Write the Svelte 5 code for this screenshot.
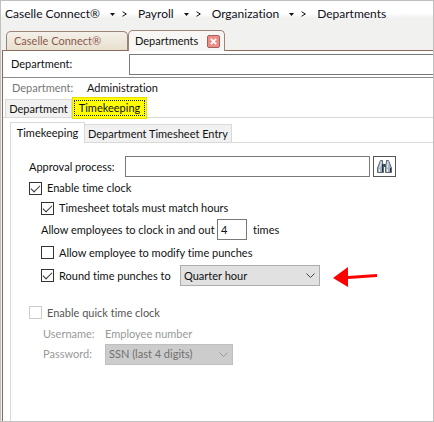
<script lang="ts">
  const crumbs = ["Caselle Connect®", "Payroll", "Organization", "Departments"];

  let department = "";
  let approvalProcess = "";
  let enableClock = true;
  let matchHours = true;
  let clockTimes = "4";
  let modifyPunches = false;
  let roundPunches = true;
  let roundTo = "Quarter hour";
  let quickClock = false;
  let password = "SSN (last 4 digits)";
</script>

<main>
  <nav class="crumbs">
    {#each crumbs as crumb, i}
      <a href="#{i}">{crumb}</a>
      {#if i < crumbs.length - 1}
        <svg class="caret" viewBox="0 0 5 3"><path d="M0 0h5L2.500 3z" /></svg>
        <svg class="angle" viewBox="0 0 5 6"><path d="M.5 .7L4.300 3L.5 5.300" /></svg>
      {/if}
    {/each}
  </nav>

  <div class="window-tabs">
    <button class="window-tab">Caselle Connect®</button>
    <div class="window-tab active">
      <button class="tab-name">Departments</button>
      <button class="close" aria-label="Close tab">
        <svg viewBox="0 0 8 8"><path d="M1 1l6 6M7 1l-6 6" /></svg>
      </button>
    </div>
  </div>

  <section class="window">
    <div class="lookup">
      <label for="department">Department:</label>
      <input id="department" type="text" bind:value={department} />
    </div>
    <div class="current">
      <span class="muted">Department:</span>
      <span>Administration</span>
    </div>

    <div class="tabs outer">
      <button class="tab">Department</button>
      <button class="tab marked"><span>Timekeeping</span></button>
    </div>

    <div class="page">
      <div class="tabs inner">
        <button class="tab active">Timekeeping</button>
        <button class="tab">Department Timesheet Entry</button>
      </div>

      <form class="form">
        <div class="row">
          <label class="approval-label" for="approval">Approval process:</label>
          <input id="approval" class="approval" type="text" bind:value={approvalProcess} />
          <button type="button" class="find" aria-label="Find">
            <svg viewBox="0 0 15 13">
              <path class="barrel" d="M3.500 .5h2v2.500l1 1.500v8H.5V8L2.500 3zM11.500 .5h-2v2.500l-1 1.500v8h6V8l-2-5z" />
              <path class="bridge" d="M6.500 4h2v3h-2z" />
              <path class="shine" d="M4 1.500v2L2.500 7.500M2.500 9v3M11 1.500v2.500l-.5 3.500M10.500 9v3" />
              <path class="shade" d="M5.500 4v8M13.500 8v4" />
            </svg>
          </button>
        </div>

        <div class="row short">
          <label class="check">
            <input type="checkbox" bind:checked={enableClock} />
            Enable time clock
          </label>
        </div>
        <div class="row short indent">
          <label class="check">
            <input type="checkbox" bind:checked={matchHours} />
            Timesheet totals must match hours
          </label>
        </div>
        <div class="row indent">
          <label class="times-label" for="times">Allow employees to clock in and out</label>
          <input id="times" class="times" type="text" bind:value={clockTimes} />
          <span>times</span>
        </div>
        <div class="row indent">
          <label class="check">
            <input type="checkbox" bind:checked={modifyPunches} />
            Allow employee to modify time punches
          </label>
        </div>
        <div class="row indent">
          <label class="check round">
            <input type="checkbox" bind:checked={roundPunches} />
            Round time punches to
          </label>
          <div class="select">
            <select aria-label="Round time punches to" bind:value={roundTo}>
              <option>Quarter hour</option>
            </select>
            <svg viewBox="0 0 9 5"><path d="M.5 .5l4 4l4-4" /></svg>
          </div>
          <svg class="pointer" viewBox="0 0 45 22">
            <path d="M0 13L15 2v9L44 9v3L15 14v8z" />
          </svg>
        </div>

        <div class="row quick">
          <label class="check dim">
            <input type="checkbox" disabled bind:checked={quickClock} />
            Enable quick time clock
          </label>
        </div>
        <div class="row login disabled">
          <span class="login-label">Username:</span>
          <span>Employee number</span>
        </div>
        <div class="row login disabled">
          <label class="login-label" for="password">Password:</label>
          <div class="select small">
            <select id="password" disabled bind:value={password}>
              <option>SSN (last 4 digits)</option>
            </select>
            <svg viewBox="0 0 9 5"><path d="M.5 .5l4 4l4-4" /></svg>
          </div>
        </div>
      </form>
    </div>
  </section>
</main>

<style>
  main {
    background: #f1f1f0;
    border: 1px solid #c0c0c0;
    box-sizing: border-box;
    color: #111;
    display: flex;
    flex-direction: column;
    font: 11px/14px Lato, "Open Sans", sans-serif;
    font-variant-ligatures: none;
    min-height: 100vh;
  }

  button,
  input,
  select {
    background: #fff;
    border: 1px solid #7a7a7a;
    border-radius: 0;
    box-sizing: border-box;
    color: inherit;
    font: inherit;
    font-variant-ligatures: none;
    margin: 0;
    padding: 0;
  }

  button {
    white-space: nowrap;
  }

  svg {
    display: block;
    fill: none;
  }

  .crumbs {
    align-items: center;
    background: linear-gradient(#fff 12px, #f1f1f0 17px);
    display: flex;
    font-size: 12px;
    height: 26px;
    padding-left: 4px;
    white-space: nowrap;
  }

  .crumbs a {
    color: #101020;
    text-decoration: none;
  }

  .caret {
    fill: #111;
    height: 3px;
    margin: 0 7px 0 10px;
    width: 5px;
  }

  .angle {
    height: 6px;
    margin-right: 11px;
    stroke: #111;
    width: 5px;
  }

  .window-tabs {
    align-items: flex-end;
    display: flex;
    height: 23px;
    padding-left: 5px;
  }

  .window-tab {
    background: linear-gradient(#f4f1ea, #e8dfce);
    border: 1px solid #9b8376;
    border-bottom: 0;
    border-radius: 5px 5px 0 0;
    box-sizing: border-box;
    color: #8a5a4c;
    height: 19px;
    padding: 0 18px 0 7px;
    text-align: left;
    width: 122px;
  }

  .window-tab.active {
    align-items: center;
    background: #f7f6f5;
    color: #111;
    display: flex;
    height: 21px;
    justify-content: space-between;
    margin-bottom: -1px;
    padding: 0 4px 0 6px;
    position: relative;
    width: 97px;
  }

  .tab-name {
    background: none;
    border: 0;
  }

  .close {
    background: #f08c86;
    border: 1px solid #9c6660;
    border-radius: 2px;
    height: 13px;
    padding: 2px;
    width: 13px;
  }

  .close svg {
    height: 7px;
    stroke: #fff;
    stroke-width: 2;
    width: 7px;
  }

  .window {
    background: #fff;
    border-left: 1px solid #8b6b5c;
    border-top: 1px solid #8b6b5c;
    display: flex;
    flex: 1;
    flex-direction: column;
    margin-left: 1px;
  }

  .lookup {
    align-items: center;
    border-bottom: 1px solid #8c8c8c;
    display: flex;
    height: 26px;
    padding-left: 8px;
  }

  .lookup label {
    width: 118px;
  }

  .lookup input {
    border-right: 0;
    flex: 1;
    height: 21px;
  }

  .current {
    align-items: center;
    display: flex;
    height: 20px;
    padding-left: 9px;
  }

  .muted {
    color: #777;
    width: 75px;
  }

  .tabs {
    align-items: flex-end;
    border-bottom: 1px solid #d9d9d9;
    display: flex;
  }

  .tab {
    background: #f1f1f1;
    border: 1px solid #d9d9d9;
    border-bottom: 0;
    height: 18px;
    text-align: center;
  }

  .outer {
    height: 19px;
    padding-left: 2px;
  }

  .outer .tab {
    width: 67px;
  }

  .outer .marked {
    background: #ff0;
    border: 1px solid #e6e000;
    height: 22px;
    margin-bottom: -2px;
    padding: 1px;
    position: relative;
    width: 75px;
  }

  .marked span {
    border: 1px dotted #222;
    display: block;
  }

  .page {
    display: flex;
    flex: 1;
    flex-direction: column;
    padding: 3px 0 0 7px;
  }

  .inner {
    height: 21px;
  }

  .inner .tab {
    border-left: 0;
    width: 147px;
  }

  .inner .tab.active {
    background: #fff;
    border-left: 1px solid #d9d9d9;
    height: 21px;
    margin-bottom: -1px;
    position: relative;
    width: 75px;
  }

  .form {
    border-left: 1px solid #d9d9d9;
    flex: 1;
    padding: 12px 0 0 18px;
  }

  .row {
    align-items: center;
    display: flex;
    height: 23px;
    white-space: nowrap;
  }

  .short {
    height: 20px;
  }

  .indent {
    padding-left: 12px;
  }

  .approval-label {
    width: 96px;
  }

  .approval {
    flex: 0 1 245px;
    height: 21px;
    min-width: 0;
  }

  .find {
    border-color: #555;
    height: 21px;
    margin-left: 3px;
    padding: 0 3px;
    width: 23px;
  }

  .find svg {
    height: 13px;
    width: 15px;
  }

  .barrel {
    fill: #a3b3c1;
    stroke: #5b6977;
  }

  .bridge {
    fill: #3b4854;
  }

  .shine {
    stroke: #e8f0f6;
  }

  .shade {
    stroke: #26303a;
  }

  .check {
    align-items: center;
    display: flex;
    gap: 5px;
  }

  .check input {
    appearance: none;
    border-color: #333;
    display: grid;
    height: 13px;
    place-items: center;
    width: 13px;
  }

  .check input:checked::before {
    border: solid #333;
    border-width: 0 0 1px 1px;
    content: "";
    height: 4px;
    margin-bottom: 2px;
    transform: rotate(-45deg);
    width: 8px;
  }

  .check input:disabled {
    border-color: #ccc;
  }

  .times-label {
    width: 176px;
  }

  .times {
    height: 21px;
    margin-right: 6px;
    padding-left: 3px;
    width: 30px;
  }

  .round {
    width: 139px;
  }

  .select {
    position: relative;
    width: 140px;
  }

  .select select {
    appearance: none;
    background: #e1e1e1;
    border-color: #adadad;
    display: block;
    height: 21px;
    padding-left: 3px;
    width: 100%;
  }

  .select svg {
    height: 5px;
    pointer-events: none;
    position: absolute;
    right: 5px;
    stroke: #444;
    top: 8px;
    width: 9px;
  }

  .pointer {
    fill: #f00;
    height: 22px;
    margin-left: 13px;
    width: 45px;
  }

  .quick {
    margin-top: 14px;
  }

  .dim {
    color: #555;
  }

  .login {
    height: 20px;
    padding-left: 14px;
  }

  .disabled {
    color: #999;
  }

  .login-label {
    width: 62px;
  }

  .small {
    width: 128px;
  }

  .small select {
    background: #ccc;
    border-color: #bfbfbf;
    color: #707070;
    opacity: 1;
  }

  .small svg {
    stroke: #999;
  }
</style>
